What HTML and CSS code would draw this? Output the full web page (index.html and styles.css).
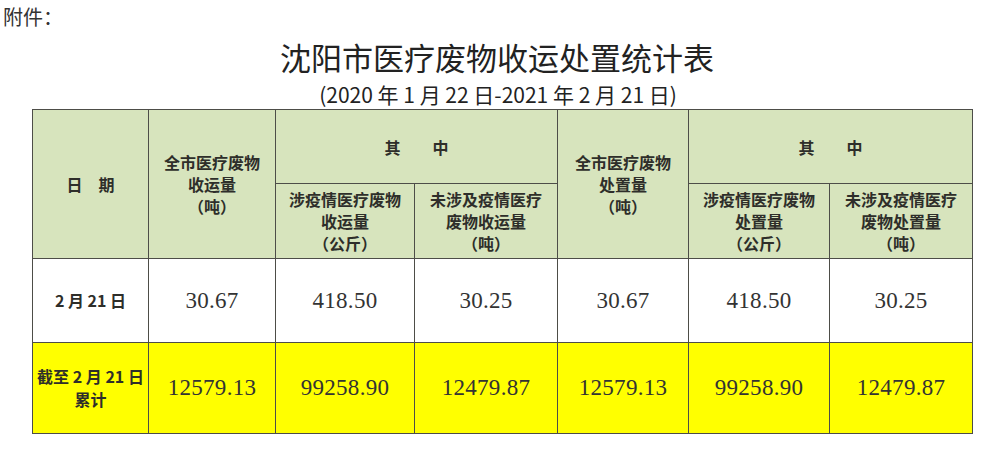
FILE: index.html
```html
<!DOCTYPE html>
<html lang="zh-CN">
<head>
<meta charset="utf-8">
<title>沈阳市医疗废物收运处置统计表</title>
<link rel="stylesheet" href="styles.css">
</head>
<body>
<div class="attach">附件：</div>
<h1 class="title">沈阳市医疗废物收运处置统计表</h1>
<div class="subtitle">(2020 年 1 月 22 日-2021 年 2 月 21 日)</div>
<table class="stats">
  <colgroup>
    <col class="c1"><col class="c2"><col class="c3"><col class="c4"><col class="c5"><col class="c6"><col class="c7">
  </colgroup>
  <tr class="h1">
    <th rowspan="2" class="head">日　期</th>
    <th rowspan="2" class="head">全市医疗废物<br>收运量<br>（吨）</th>
    <th colspan="2" class="head">其　　中</th>
    <th rowspan="2" class="head">全市医疗废物<br>处置量<br>（吨）</th>
    <th colspan="2" class="head">其　　中</th>
  </tr>
  <tr class="h2">
    <th class="head sub">涉疫情医疗废物<br>收运量<br>（公斤）</th>
    <th class="head sub">未涉及疫情医疗<br>废物收运量<br>（吨）</th>
    <th class="head sub">涉疫情医疗废物<br>处置量<br>（公斤）</th>
    <th class="head sub">未涉及疫情医疗<br>废物处置量<br>（吨）</th>
  </tr>
  <tr class="day">
    <td class="label">2 月 21 日</td>
    <td class="num">30.67</td>
    <td class="num">418.50</td>
    <td class="num">30.25</td>
    <td class="num">30.67</td>
    <td class="num">418.50</td>
    <td class="num">30.25</td>
  </tr>
  <tr class="total">
    <td class="label">截至 2 月 21 日<br>累计</td>
    <td class="num">12579.13</td>
    <td class="num">99258.90</td>
    <td class="num">12479.87</td>
    <td class="num">12579.13</td>
    <td class="num">99258.90</td>
    <td class="num">12479.87</td>
  </tr>
</table>
</body>
</html>
```

FILE: styles.css
```css
html, body {
  margin: 0;
  padding: 0;
  background: #ffffff;
}

body {
  font-family: "Noto Sans CJK SC", "Noto Sans", sans-serif;
  color: #222222;
}

.attach {
  margin-top: 2px;
  padding-left: 3px;
  font-size: 20px;
  line-height: 30px;
  color: #333333;
}

.title {
  margin: 5px 0 0 0;
  text-align: center;
  font-size: 31px;
  font-weight: 400;
  line-height: 40px;
  color: #222222;
  padding-right: 6px;
}

.subtitle {
  margin-top: 4px;
  text-align: center;
  font-size: 21px;
  line-height: 26px;
  color: #222222;
  padding-right: 4px;
}

.stats {
  margin: 2px 0 0 32px;
  border-collapse: collapse;
  table-layout: fixed;
  width: 941px;
  border: 1px solid #5c5c52;
}

.c1 { width: 116px; }
.c2 { width: 127px; }
.c3 { width: 139px; }
.c4 { width: 143px; }
.c5 { width: 131px; }
.c6 { width: 141px; }
.c7 { width: 143px; }

.stats th,
.stats td {
  border: 1px solid #4d4d48;
  padding: 0;
  text-align: center;
  vertical-align: middle;
}

.head {
  background: #d7e4bd;
  font-family: "Noto Sans CJK SC", sans-serif;
  font-weight: 700;
  font-size: 16px;
  line-height: 22px;
  color: #2e2e2a;
}

.h1 { height: 74px; }
.h2 { height: 75px; }
.day { height: 84px; }
.total { height: 91px; }

.sub {
  padding-top: 2px;
}

.label {
  font-family: "Noto Sans CJK SC", sans-serif;
  font-weight: 700;
  font-size: 16px;
  line-height: 23px;
  color: #2e2e2a;
  white-space: nowrap;
}

.num {
  font-family: "Liberation Serif", "Times New Roman", serif;
  font-size: 23px;
  color: #333333;
  letter-spacing: 0.3px;
}

.day td { background: #ffffff; }
.total td { background: #ffff00; }
```
